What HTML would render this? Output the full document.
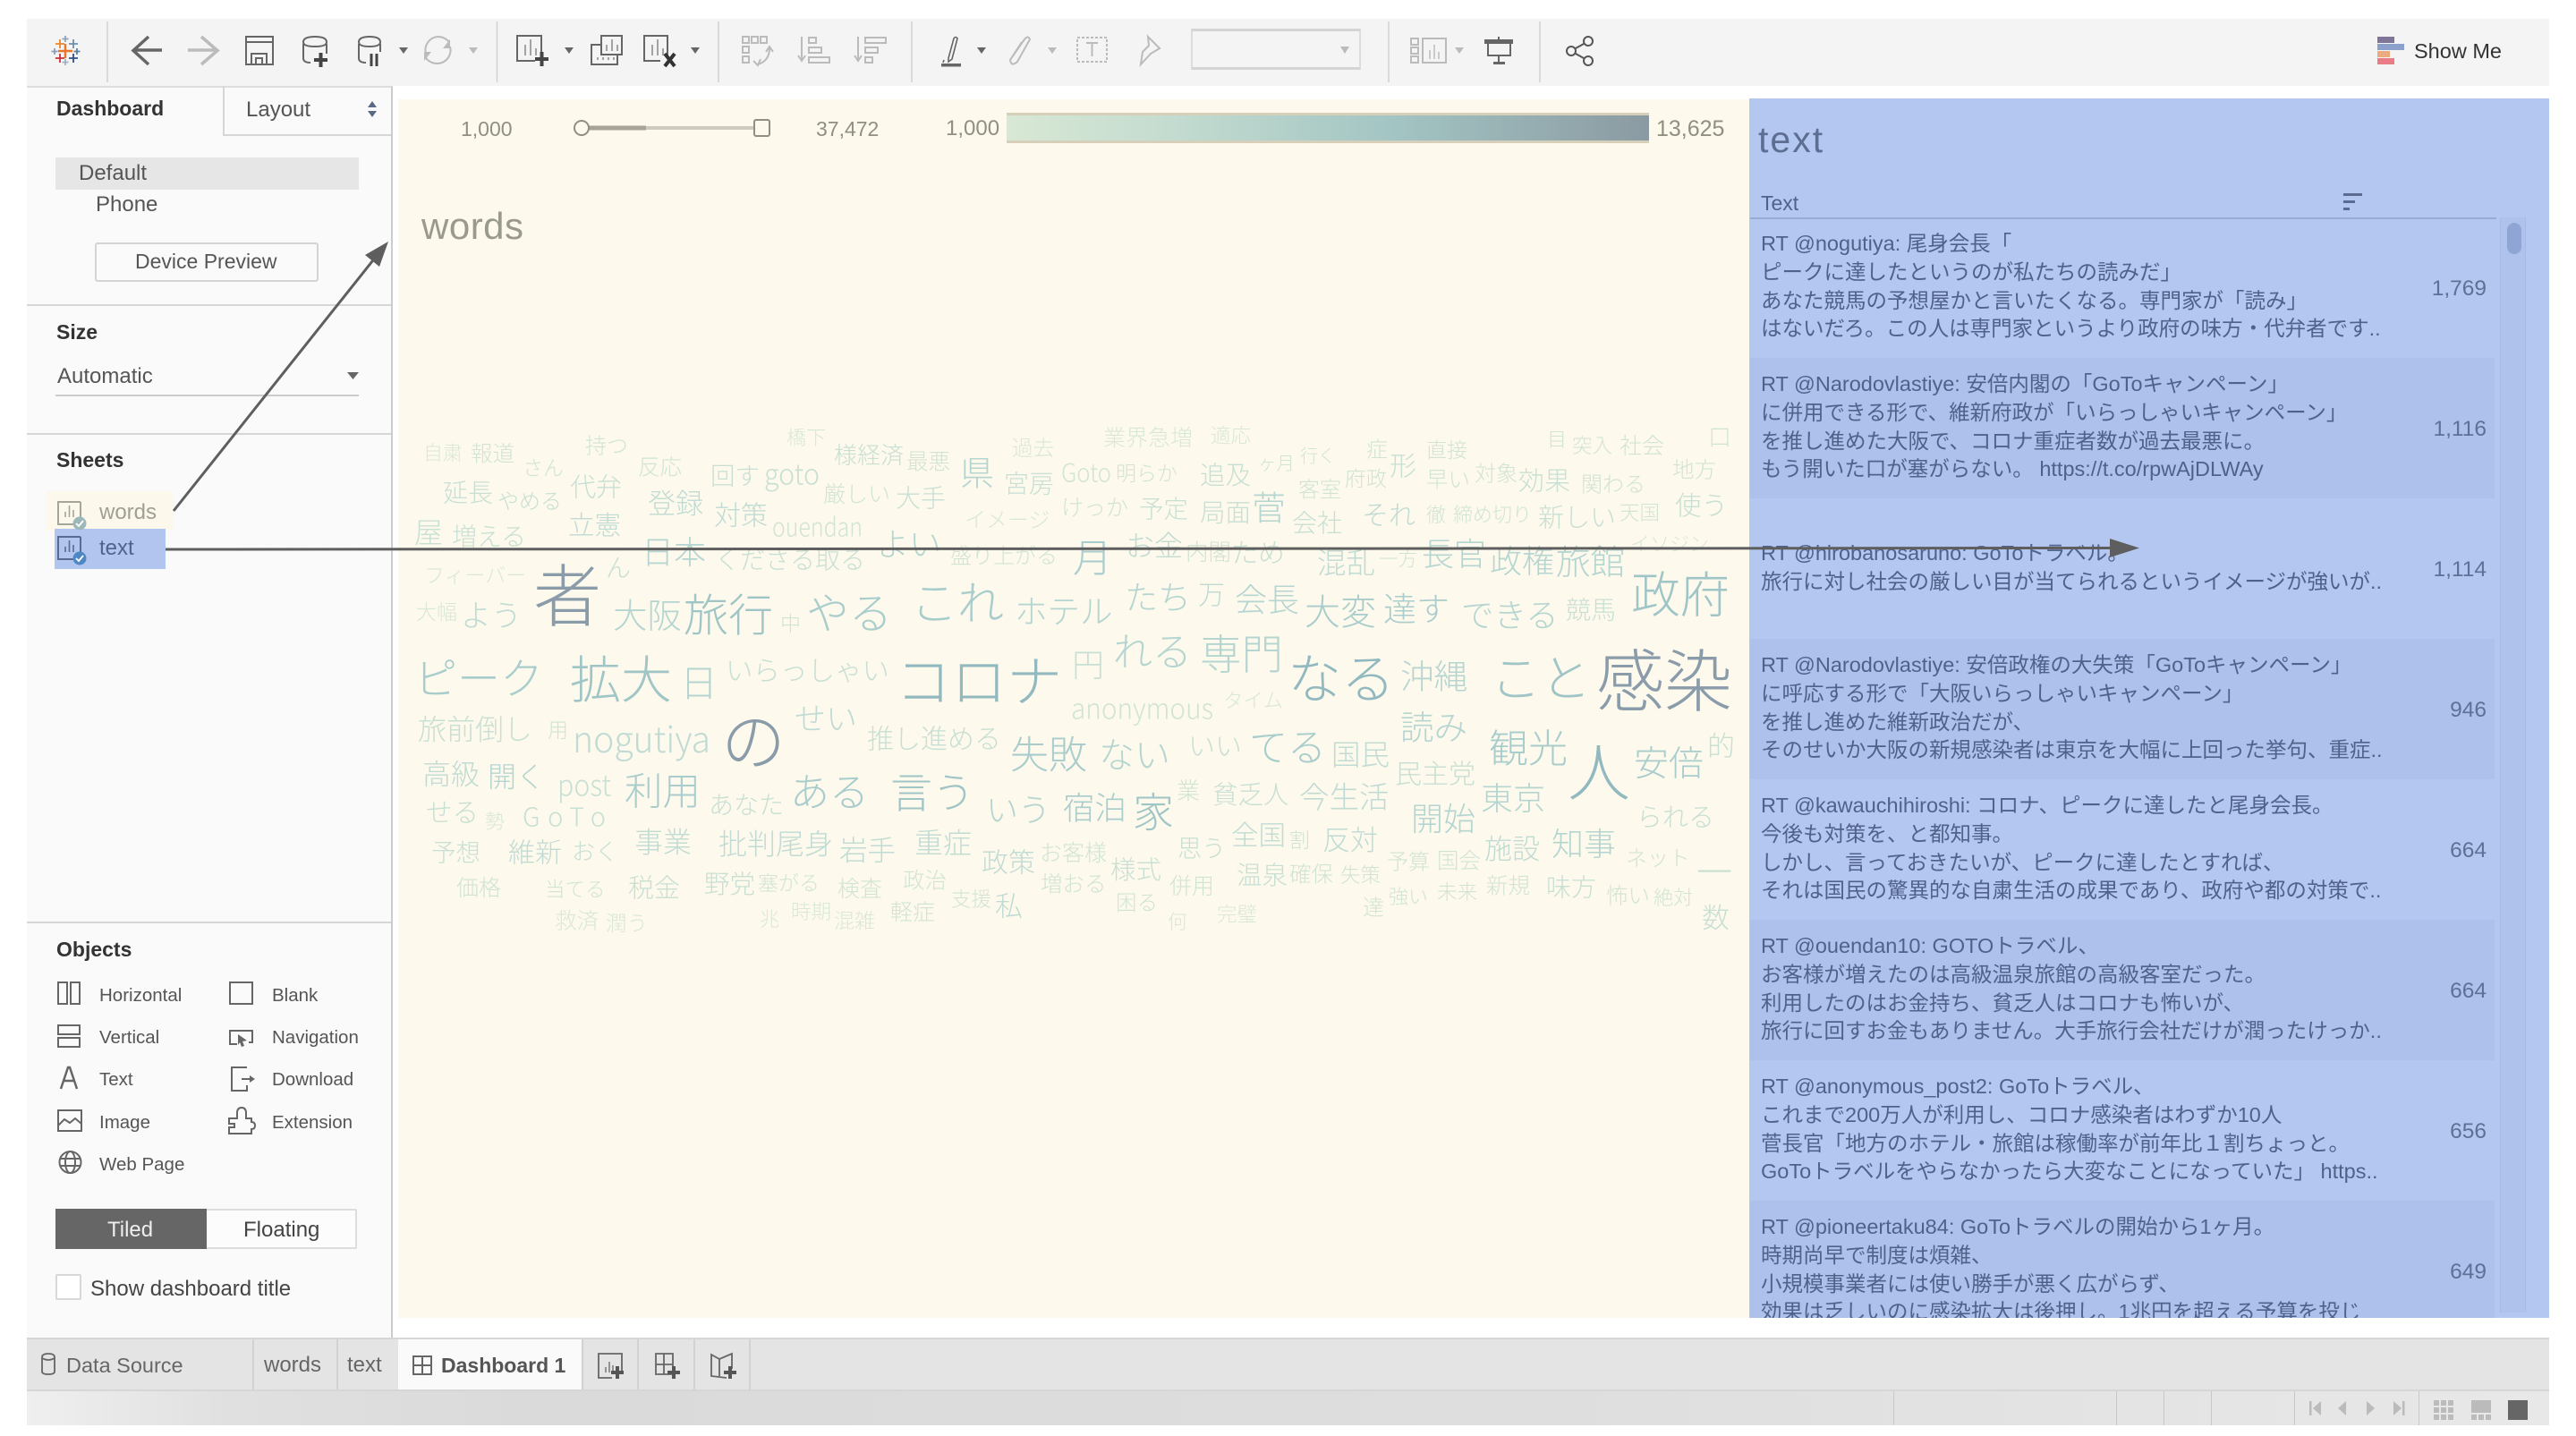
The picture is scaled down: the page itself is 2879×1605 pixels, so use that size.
<!DOCTYPE html>
<html lang="ja"><head><meta charset="utf-8"><title>Dashboard 1</title>
<style>
html,body{margin:0;padding:0;background:#fff;width:2879px;height:1605px;overflow:hidden}
body{position:relative;font-family:"Liberation Sans","Noto Sans CJK JP",sans-serif;color:#555}
.b{position:absolute;box-sizing:border-box}
.t{position:absolute;line-height:0;white-space:nowrap;font-size:24px;color:#555}
.h{font-weight:bold;font-size:23px;color:#333}
.o{font-size:20.5px;color:#555}
svg{position:absolute;left:0;top:0}
#cloud text{font-family:"Noto Sans CJK JP",sans-serif;font-weight:300;dominant-baseline:central;transform:translateY(-.05em)}
.a{fill:#d9e8d6}.c{fill:#d1e4d4}.d{fill:#c8dfd4}.e{fill:#c0dbd4}.f{fill:#b5d5d1}.g{fill:#a9cdcc}.i{fill:#a0c5c6}.j{fill:#93b9c0}.k{fill:#8a9caa}
.row{position:absolute;left:1956px;width:832px;height:157px;display:flex;align-items:center;overflow:visible}
.row.alt{background:#adc1ec}
.row .x{padding-left:12px;font-size:23.5px;line-height:31.7px;color:#50628a;white-space:nowrap;flex:1;position:relative;top:-1px}
.row .n{font-size:24.5px;color:#5f7096;padding-right:9px;position:relative;top:1px}
</style></head><body>

<!-- toolbar -->
<div class="b" style="left:30px;top:21px;width:2819px;height:75px;background:#f4f4f4"></div>

<!-- sidebar -->
<div class="b" style="left:30px;top:96px;width:409px;height:1399px;background:#fafafa;border-right:2px solid #ccc;border-top:2px solid #ddd"></div>
<div class="b" style="left:249px;top:96px;width:188px;height:56px;border-left:2px solid #d6d6d6;border-bottom:2px solid #d6d6d6"></div>
<div class="t h" style="left:63px;top:121px">Dashboard</div>
<div class="t" style="left:275px;top:123px">Layout</div>
<div class="b" style="left:62px;top:176px;width:339px;height:36px;background:#e6e6e6"></div>
<div class="t" style="left:88px;top:194px">Default</div>
<div class="t" style="left:107px;top:229px">Phone</div>
<div class="b" style="left:106px;top:271px;width:250px;height:44px;border:2px solid #d4d4d4;border-radius:3px"></div>
<div class="t" style="left:151px;top:292px;font-size:23px">Device Preview</div>
<div class="b" style="left:30px;top:340px;width:407px;height:2px;background:#d6d6d6"></div>
<div class="t h" style="left:63px;top:371px">Size</div>
<div class="t" style="left:64px;top:421px">Automatic</div>
<div class="b" style="left:62px;top:441px;width:339px;height:2px;background:#ccc"></div>
<div class="b" style="left:30px;top:484px;width:407px;height:2px;background:#d6d6d6"></div>
<div class="t h" style="left:63px;top:514px">Sheets</div>
<div class="b" style="left:52px;top:549px;width:142px;height:44px;background:#fcf9ec"></div>
<div class="b" style="left:61px;top:591px;width:124px;height:45px;background:#b1c5ee"></div>
<div class="t" style="left:111px;top:573px;color:#a0a092">words</div>
<div class="t" style="left:111px;top:613px;color:#50638a">text</div>
<div class="b" style="left:30px;top:1030px;width:407px;height:2px;background:#d6d6d6"></div>
<div class="t h" style="left:63px;top:1061px">Objects</div>
<div class="t o" style="left:111px;top:1113px">Horizontal</div>
<div class="t o" style="left:111px;top:1160px">Vertical</div>
<div class="t o" style="left:111px;top:1207px">Text</div>
<div class="t o" style="left:111px;top:1255px">Image</div>
<div class="t o" style="left:111px;top:1302px">Web Page</div>
<div class="t o" style="left:304px;top:1113px">Blank</div>
<div class="t o" style="left:304px;top:1160px">Navigation</div>
<div class="t o" style="left:304px;top:1207px">Download</div>
<div class="t o" style="left:304px;top:1255px">Extension</div>
<div class="b" style="left:62px;top:1351px;width:169px;height:45px;background:#666"></div>
<div class="b" style="left:231px;top:1351px;width:168px;height:45px;border:2px solid #ddd;border-left:0;border-radius:0 2px 2px 0;background:#fcfcfc"></div>
<div class="t" style="left:120px;top:1375px;color:#eee">Tiled</div>
<div class="t" style="left:272px;top:1375px;color:#444">Floating</div>
<div class="b" style="left:62px;top:1424px;width:29px;height:29px;border:2px solid #d8d8d8;background:#fff;border-radius:2px"></div>
<div class="t" style="left:101px;top:1441px;color:#444">Show dashboard title</div>

<!-- dashboard zones -->
<div class="b" style="left:445px;top:111px;width:1510px;height:1362px;background:#fdf9ec"></div>
<div class="t" style="left:515px;top:144px;font-size:23px;color:#8f8f82">1,000</div>
<div class="t" style="left:912px;top:144px;font-size:23px;color:#8f8f82">37,472</div>
<div class="t" style="left:1057px;top:144px;font-size:24px;color:#8f8f82">1,000</div>
<div class="b" style="left:1125px;top:126px;width:718px;height:34px;background:linear-gradient(90deg,#d8e8d4,#c4dcd0 25%,#a3c5c3 60%,#8b9aa2);border-top:3px solid #d6cfba;border-bottom:3px solid #d6cfba"></div>
<div class="t" style="left:1851px;top:144px;font-size:25px;color:#8f8f82">13,625</div>
<div class="t" style="left:471px;top:253px;font-size:42px;color:#9a9a8c;letter-spacing:.5px">words</div>

<!-- text panel -->
<div class="b" style="left:1955px;top:110px;width:894px;height:1363px;background:#b3c7f0;overflow:hidden">
  <div class="b" style="left:839px;top:133px;width:29px;height:1224px;background:#aec2ec;border-left:1px solid #a6bae5;border-right:1px solid #a6bae5"></div>
  <div class="b" style="left:847px;top:139px;width:16px;height:35px;background:#8fa5d4;border-radius:8px"></div>
  <div class="b" style="left:1px;top:133px;width:834px;height:2px;background:#98abd4"></div>
</div>
<div class="t" style="left:1965px;top:156px;font-size:41px;color:#5d6e92;letter-spacing:2px">text</div>
<div class="t" style="left:1968px;top:227px;font-size:23px;color:#50628a">Text</div>

<div class="b" style="left:0;top:0;width:2879px;height:1473px;overflow:hidden;pointer-events:none">
<div class="row" style="top:243px"><div class="x">RT @nogutiya: 尾身会長「<br>ピークに達したというのが私たちの読みだ」<br>あなた競馬の予想屋かと言いたくなる。専門家が「読み」<br>はないだろ。この人は専門家というより政府の味方・代弁者です..</div><div class="n">1,769</div></div>
<div class="row alt" style="top:400px"><div class="x">RT @Narodovlastiye: 安倍内閣の「GoToキャンペーン」<br>に併用できる形で、維新府政が「いらっしゃいキャンペーン」<br>を推し進めた大阪で、コロナ重症者数が過去最悪に。<br>もう開いた口が塞がらない。 https://t.co/rpwAjDLWAy</div><div class="n">1,116</div></div>
<div class="row" style="top:557px"><div class="x">RT @hirobanosaruno: GoToトラベル。<br>旅行に対し社会の厳しい目が当てられるというイメージが強いが..</div><div class="n">1,114</div></div>
<div class="row alt" style="top:714px"><div class="x">RT @Narodovlastiye: 安倍政権の大失策「GoToキャンペーン」<br>に呼応する形で「大阪いらっしゃいキャンペーン」<br>を推し進めた維新政治だが、<br>そのせいか大阪の新規感染者は東京を大幅に上回った挙句、重症..</div><div class="n">946</div></div>
<div class="row" style="top:871px"><div class="x">RT @kawauchihiroshi: コロナ、ピークに達したと尾身会長。<br>今後も対策を、と都知事。<br>しかし、言っておきたいが、ピークに達したとすれば、<br>それは国民の驚異的な自粛生活の成果であり、政府や都の対策で..</div><div class="n">664</div></div>
<div class="row alt" style="top:1028px"><div class="x">RT @ouendan10: GOTOトラベル、<br>お客様が増えたのは高級温泉旅館の高級客室だった。<br>利用したのはお金持ち、貧乏人はコロナも怖いが、<br>旅行に回すお金もありません。大手旅行会社だけが潤ったけっか..</div><div class="n">664</div></div>
<div class="row" style="top:1185px"><div class="x">RT @anonymous_post2: GoToトラベル、<br>これまで200万人が利用し、コロナ感染者はわずか10人<br>菅長官「地方のホテル・旅館は稼働率が前年比１割ちょっと。<br>GoToトラベルをやらなかったら大変なことになっていた」 https..</div><div class="n">656</div></div>
<div class="row alt" style="top:1342px"><div class="x">RT @pioneertaku84: GoToトラベルの開始から1ヶ月。<br>時期尚早で制度は煩雑、<br>小規模事業者には使い勝手が悪く広がらず、<br>効果は乏しいのに感染拡大は後押し。1兆円を超える予算を投じ</div><div class="n">649</div></div>
</div>

<!-- tab bar -->
<div class="b" style="left:30px;top:1495px;width:2819px;height:60px;background:#e4e4e4;border-top:2px solid #d6d6d6;border-bottom:2px solid #d6d6d6"></div>
<div class="b" style="left:445px;top:1497px;width:206px;height:56px;background:#fafafa"></div>
<div class="b" style="left:282px;top:1497px;width:2px;height:56px;background:#d2d2d2"></div>
<div class="b" style="left:376px;top:1497px;width:2px;height:56px;background:#d2d2d2"></div>
<div class="b" style="left:650px;top:1497px;width:2px;height:56px;background:#d2d2d2"></div>
<div class="b" style="left:712px;top:1497px;width:2px;height:56px;background:#d2d2d2"></div>
<div class="b" style="left:775px;top:1497px;width:2px;height:56px;background:#d2d2d2"></div>
<div class="b" style="left:837px;top:1497px;width:2px;height:56px;background:#d2d2d2"></div>
<div class="t" style="left:74px;top:1526px;font-size:23.5px;color:#666">Data Source</div>
<div class="t" style="left:295px;top:1526px;color:#666">words</div>
<div class="t" style="left:388px;top:1526px;color:#666">text</div>
<div class="t" style="left:493px;top:1526px;font-size:23px;font-weight:bold;color:#555">Dashboard 1</div>
<!-- status bar -->
<div class="b" style="left:30px;top:1555px;width:2819px;height:38px;background:linear-gradient(90deg,#efefef,#e0e0e0 8%,#dadada 20%,#dedede 60%,#e8e8e8)"></div>
<div class="b" style="left:2116px;top:1555px;width:1px;height:38px;background:#c8c8c8"></div>
<div class="b" style="left:2365px;top:1555px;width:1px;height:38px;background:#c8c8c8"></div>
<div class="b" style="left:2418px;top:1555px;width:1px;height:38px;background:#c8c8c8"></div>
<div class="b" style="left:2471px;top:1555px;width:1px;height:38px;background:#c8c8c8"></div>
<div class="b" style="left:2564px;top:1555px;width:1px;height:38px;background:#c8c8c8"></div>
<div class="b" style="left:2703px;top:1555px;width:1px;height:38px;background:#c8c8c8"></div>
<div class="b" style="left:2803px;top:1565px;width:22px;height:22px;background:#666"></div>

<!-- Show Me & dropdown -->
<div class="b" style="left:1331px;top:32px;width:190px;height:46px;border:2px solid #dcdcdc;border-top:3px solid #d4d4d4;border-bottom:3px solid #d4d4d4;background:#f4f4f4"></div>
<div class="t" style="left:2698px;top:57px;font-size:23.5px;color:#333">Show Me</div>

<!-- word cloud -->
<svg id="cloud" width="2879" height="1605" viewBox="0 0 2879 1605">
<text class="a" x="473" y="506" font-size="22">自粛</text>
<text class="c" x="526" y="507" font-size="24.5">報道</text>
<text class="c" x="584" y="522" font-size="23">さん</text>
<text class="c" x="654" y="497" font-size="24">持つ</text>
<text class="a" x="879" y="489" font-size="22">橋下</text>
<text class="d" x="932" y="509" font-size="26">様経済</text>
<text class="c" x="1013" y="516" font-size="24.5">最悪</text>
<text class="a" x="1131" y="500" font-size="23.5">過去</text>
<text class="c" x="713" y="522" font-size="24.5">反応</text>
<text class="d" x="794" y="531" font-size="27.5">回す</text>
<text class="d" x="854" y="530" font-size="32" textLength="62" lengthAdjust="spacingAndGlyphs">goto</text>
<text class="f" x="1073" y="528" font-size="38">県</text>
<text class="d" x="1122" y="541" font-size="28">宮房</text>
<text class="d" x="495" y="551" font-size="28">延長</text>
<text class="d" x="556" y="559" font-size="24">やめる</text>
<text class="d" x="637" y="544" font-size="29">代弁</text>
<text class="c" x="920" y="552" font-size="25">厳しい</text>
<text class="d" x="1001" y="557" font-size="28">大手</text>
<text class="e" x="724" y="562" font-size="31">登録</text>
<text class="e" x="798" y="575" font-size="30">対策</text>
<text class="a" x="1078" y="580" font-size="24">イメージ</text>
<text class="d" x="463" y="595" font-size="32">屋</text>
<text class="d" x="505" y="600" font-size="28">増える</text>
<text class="e" x="635" y="587" font-size="29.5">立憲</text>
<text class="c" x="863" y="589" font-size="29" textLength="101" lengthAdjust="spacingAndGlyphs">ouendan</text>
<text class="f" x="717" y="617" font-size="36">日本</text>
<text class="d" x="799" y="626" font-size="28">くださる取る</text>
<text class="f" x="980" y="608" font-size="36">よい</text>
<text class="c" x="1062" y="620" font-size="24">盛り上がる</text>
<text class="a" x="474" y="642" font-size="23">フィーバー</text>
<text class="k" x="596" y="665" font-size="76">者</text>
<text class="d" x="677" y="635" font-size="28">ん</text>
<text class="a" x="465" y="683" font-size="23">大幅</text>
<text class="e" x="515" y="687" font-size="34">よう</text>
<text class="f" x="685" y="688" font-size="38.5">大阪</text>
<text class="i" x="764" y="687" font-size="50">旅行</text>
<text class="c" x="872" y="696" font-size="23">中</text>
<text class="g" x="901" y="684" font-size="48">やる</text>
<text class="g" x="1018" y="673" font-size="52">これ</text>
<text class="f" x="1134" y="683" font-size="36.5">ホテル</text>
<text class="g" x="463" y="757" font-size="48">ピーク</text>
<text class="i" x="637" y="759" font-size="57">拡大</text>
<text class="f" x="760" y="763" font-size="42">日</text>
<text class="d" x="811" y="749" font-size="30.5">いらっしゃい</text>
<text class="j" x="1001" y="760" font-size="62">コロナ</text>
<text class="d" x="1198" y="743" font-size="36">円</text>
<text class="f" x="1244" y="727" font-size="44">れる</text>
<text class="f" x="1341" y="731" font-size="46.5">専門</text>
<text class="j" x="1439" y="758" font-size="60">なる</text>
<text class="f" x="1565" y="755" font-size="37.5">沖縄</text>
<text class="i" x="1666" y="758" font-size="56">こと</text>
<text class="k" x="1784" y="760" font-size="76">感染</text>
<text class="a" x="1233" y="489" font-size="25">業界急増</text>
<text class="a" x="1353" y="487" font-size="22.5">適応</text>
<text class="c" x="1186" y="529" font-size="28" textLength="56" lengthAdjust="spacingAndGlyphs">Goto</text>
<text class="c" x="1247" y="528" font-size="23">明らか</text>
<text class="d" x="1341" y="531" font-size="28.5">追及</text>
<text class="c" x="1406" y="517" font-size="20.5">ヶ月</text>
<text class="c" x="1453" y="509" font-size="20">行く</text>
<text class="c" x="1527" y="501" font-size="24">症</text>
<text class="d" x="1553" y="520" font-size="30">形</text>
<text class="c" x="1594" y="502" font-size="23">直接</text>
<text class="c" x="1729" y="491" font-size="22">目</text>
<text class="c" x="1757" y="498" font-size="22.5">突入</text>
<text class="c" x="1810" y="498" font-size="25">社会</text>
<text class="c" x="1909" y="489" font-size="26">口</text>
<text class="c" x="1451" y="546" font-size="24">客室</text>
<text class="c" x="1503" y="534" font-size="23.5">府政</text>
<text class="c" x="1594" y="536" font-size="24.5">早い</text>
<text class="c" x="1648" y="528" font-size="24">対象</text>
<text class="d" x="1697" y="537" font-size="29">効果</text>
<text class="c" x="1767" y="540" font-size="24">関わる</text>
<text class="c" x="1869" y="525" font-size="24.5">地方</text>
<text class="c" x="1186" y="567" font-size="25">けっか</text>
<text class="d" x="1273" y="568" font-size="27.5">予定</text>
<text class="d" x="1341" y="573" font-size="28.5">局面</text>
<text class="f" x="1399" y="567" font-size="38">菅</text>
<text class="d" x="1444" y="585" font-size="28">会社</text>
<text class="e" x="1522" y="575" font-size="30">それ</text>
<text class="c" x="1594" y="575" font-size="22">徹</text>
<text class="c" x="1624" y="575" font-size="22">締め切り</text>
<text class="d" x="1719" y="578" font-size="29">新しい</text>
<text class="c" x="1810" y="573" font-size="22.5">天国</text>
<text class="d" x="1872" y="565" font-size="29.5">使う</text>
<text class="g" x="1199" y="622" font-size="44">月</text>
<text class="e" x="1258" y="610" font-size="32">お金</text>
<text class="c" x="1325" y="617" font-size="25.5">内閣</text>
<text class="d" x="1376" y="617" font-size="30">ため</text>
<text class="e" x="1472" y="629" font-size="32.5">混乱</text>
<text class="c" x="1541" y="625" font-size="21.5">一方</text>
<text class="f" x="1589" y="619" font-size="36">長官</text>
<text class="f" x="1665" y="627" font-size="36">政権</text>
<text class="f" x="1739" y="628" font-size="38.5">旅館</text>
<text class="a" x="1822" y="608" font-size="22">イソジン</text>
<text class="f" x="1257" y="667" font-size="37">たち</text>
<text class="e" x="1339" y="664" font-size="30">万</text>
<text class="f" x="1380" y="670" font-size="36">会長</text>
<text class="g" x="1458" y="683" font-size="40">大変</text>
<text class="g" x="1546" y="680" font-size="37">達す</text>
<text class="f" x="1633" y="687" font-size="36.5">できる</text>
<text class="d" x="1750" y="682" font-size="28">競馬</text>
<text class="i" x="1823" y="663" font-size="55">政府</text>
<text class="d" x="467" y="815" font-size="32">旅前倒し</text>
<text class="c" x="612" y="815" font-size="23">用</text>
<text class="e" x="640" y="826" font-size="40" textLength="154" lengthAdjust="spacingAndGlyphs">nogutiya</text>
<text class="k" x="806" y="827" font-size="72">の</text>
<text class="e" x="888" y="803" font-size="35">せい</text>
<text class="d" x="969" y="825" font-size="30">推し進める</text>
<text class="g" x="1129" y="843" font-size="43">失敗</text>
<text class="f" x="1228" y="843" font-size="40">ない</text>
<text class="d" x="1328" y="833" font-size="30">いい</text>
<text class="g" x="1396" y="835" font-size="43">てる</text>
<text class="e" x="1488" y="843" font-size="32.5">国民</text>
<text class="f" x="1565" y="812" font-size="37.5">読み</text>
<text class="g" x="1664" y="835" font-size="44">観光</text>
<text class="j" x="1752" y="863" font-size="70">人</text>
<text class="g" x="1826" y="853" font-size="39">安倍</text>
<text class="d" x="1908" y="833" font-size="31">的</text>
<text class="e" x="472" y="865" font-size="32">高級</text>
<text class="f" x="545" y="868" font-size="32">開く</text>
<text class="d" x="623" y="877" font-size="33" textLength="60" lengthAdjust="spacingAndGlyphs">post</text>
<text class="g" x="698" y="884" font-size="42.5">利用</text>
<text class="d" x="792" y="900" font-size="28">あなた</text>
<text class="g" x="883" y="884" font-size="44">ある</text>
<text class="i" x="995" y="885" font-size="47">言う</text>
<text class="f" x="1102" y="905" font-size="36">いう</text>
<text class="g" x="1188" y="903" font-size="35.5">宿泊</text>
<text class="i" x="1266" y="908" font-size="46">家</text>
<text class="c" x="1315" y="884" font-size="26">業</text>
<text class="d" x="1355" y="888" font-size="28.5">貧乏人</text>
<text class="e" x="1452" y="890" font-size="33.5">今生活</text>
<text class="d" x="1559" y="864" font-size="30">民主党</text>
<text class="f" x="1655" y="892" font-size="36">東京</text>
<text class="f" x="1577" y="915" font-size="36">開始</text>
<text class="d" x="1829" y="913" font-size="29">られる</text>
<text class="d" x="476" y="908" font-size="29.5">せる</text>
<text class="a" x="542" y="918" font-size="22">勢</text>
<text class="d" x="584" y="913" font-size="29" textLength="93">GoTo</text>
<text class="e" x="709" y="941" font-size="32">事業</text>
<text class="e" x="803" y="943" font-size="32">批判尾身</text>
<text class="e" x="938" y="950" font-size="31.5">岩手</text>
<text class="e" x="1022" y="942" font-size="32">重症</text>
<text class="e" x="1097" y="963" font-size="30">政策</text>
<text class="c" x="1162" y="953" font-size="25">お客様</text>
<text class="d" x="1241" y="972" font-size="28.5">様式</text>
<text class="d" x="1316" y="948" font-size="27">思う</text>
<text class="e" x="1376" y="933" font-size="30.5">全国</text>
<text class="c" x="1441" y="938" font-size="23">割</text>
<text class="e" x="1478" y="938" font-size="31">反対</text>
<text class="e" x="1659" y="948" font-size="31">施設</text>
<text class="f" x="1734" y="943" font-size="36">知事</text>
<text class="c" x="1817" y="958" font-size="24">ネット</text>
<text class="d" x="1896" y="974" font-size="40">一</text>
<text class="d" x="482" y="952" font-size="27.5">予想</text>
<text class="e" x="568" y="952" font-size="30">維新</text>
<text class="d" x="639" y="952" font-size="26">おく</text>
<text class="c" x="510" y="992" font-size="25">価格</text>
<text class="c" x="609" y="994" font-size="22.5">当てる</text>
<text class="d" x="702" y="992" font-size="29">税金</text>
<text class="d" x="787" y="988" font-size="28.5">野党</text>
<text class="c" x="847" y="986" font-size="23">塞がる</text>
<text class="c" x="936" y="993" font-size="25">検査</text>
<text class="c" x="1009" y="984" font-size="24.5">政治</text>
<text class="c" x="1063" y="1005" font-size="22.5">支援</text>
<text class="e" x="1112" y="1012" font-size="31">私</text>
<text class="c" x="1163" y="988" font-size="24.5">増おる</text>
<text class="c" x="1307" y="990" font-size="25">併用</text>
<text class="c" x="1247" y="1008" font-size="23.5">困る</text>
<text class="d" x="1382" y="978" font-size="28.5">温泉</text>
<text class="c" x="1441" y="977" font-size="24.5">確保</text>
<text class="c" x="1498" y="978" font-size="22.5">失策</text>
<text class="c" x="1550" y="962" font-size="24">予算</text>
<text class="c" x="1606" y="962" font-size="24.5">国会</text>
<text class="c" x="1552" y="1002" font-size="22">強い</text>
<text class="c" x="1606" y="997" font-size="22.5">未来</text>
<text class="c" x="1661" y="990" font-size="24.5">新規</text>
<text class="d" x="1728" y="992" font-size="28">味方</text>
<text class="c" x="1795" y="1001" font-size="24.5">怖い</text>
<text class="c" x="1848" y="1003" font-size="22">絶対</text>
<text class="d" x="1902" y="1025" font-size="31">数</text>
<text class="c" x="1523" y="1013" font-size="24">達</text>
<text class="a" x="1360" y="1022" font-size="22.5">完璧</text>
<text class="a" x="1305" y="1030" font-size="22">何</text>
<text class="a" x="620" y="1029" font-size="24.5">救済</text>
<text class="a" x="677" y="1031" font-size="23.5">潤う</text>
<text class="a" x="849" y="1027" font-size="22">兆</text>
<text class="a" x="884" y="1019" font-size="22.5">時期</text>
<text class="a" x="932" y="1028" font-size="23">混雑</text>
<text class="c" x="995" y="1019" font-size="25">軽症</text>
<text class="c" x="1197" y="792" font-size="32" textLength="159" lengthAdjust="spacingAndGlyphs">anonymous</text>
<text class="a" x="1367" y="783" font-size="22.5">タイム</text>
</svg>

<!-- icons and arrows -->
<svg width="2879" height="1605" viewBox="0 0 2879 1605" fill="none">
<!-- toolbar dividers -->
<path d="M120 24V92M555.5 24V92M803 24V92M1019 24V92M1552 24V92M1721 24V92" stroke="#d2d2d2" stroke-width="1.5"/>
<!-- logo -->
<g stroke-width="1.8">
<path d="M73 40V47M69.5 43.5H76.5" stroke="#8fa3b8"/>
<path d="M67 44V54M62 49H72" stroke="#e8862f"/>
<path d="M82 44V54M77 49H87" stroke="#6d8fae"/>
<path d="M73 49V65M65 57H81" stroke="#e8762b" stroke-width="2.5"/>
<path d="M61 54V61M57.5 57.5H64.5" stroke="#8aa0b6"/>
<path d="M86 54V61M82.5 57.5H89.5" stroke="#5f7f9e"/>
<path d="M67 60V70M62 65H72" stroke="#c8323c"/>
<path d="M82 60V70M77 65H87" stroke="#2d4f86"/>
<path d="M73 66V73M69.5 69.5H76.5" stroke="#9fb2c4"/>
</g>
<!-- back / forward -->
<path d="M181 56H150M166 41L149 56.5L166 72" stroke="#666" stroke-width="3.5"/>
<path d="M210 56H241M225 41L243 56.5L225 72" stroke="#bbb" stroke-width="3.5"/>
<!-- save -->
<path d="M275 41H305V72H275ZM275 47H305M281 72V60H298V72M286 72V65H293V72" stroke="#666" stroke-width="2"/>
<!-- new data source -->
<path d="M339 49V65Q339 70 347 70M365 49V60M339 47Q339 41 352 41Q365 41 365 47Q365 52 352 52Q339 52 339 47Z" stroke="#666" stroke-width="2"/>
<path d="M351 67H366M358.5 59V75" stroke="#444" stroke-width="4"/>
<!-- pause -->
<path d="M401 49V65Q401 70 409 70M425 49V58M401 47Q401 41 413 41Q425 41 425 47Q425 52 413 52Q401 52 401 47Z" stroke="#666" stroke-width="2"/>
<path d="M415 60V74M421 60V74" stroke="#444" stroke-width="3"/>
<g fill="#666"><path d="M446 53H456L451 60Z"/><path d="M631 53H641L636 60Z"/><path d="M772 53H782L777 60Z"/><path d="M1092 53H1102L1097 60Z"/></g>
<g fill="#bbb"><path d="M524 53H534L529 60Z"/><path d="M1171 53H1181L1176 60Z"/><path d="M1626 53H1636L1631 60Z"/><path d="M1498 52H1508L1503 60Z"/></g>
<!-- refresh -->
<path d="M476 60A15 15 0 0 1 489 41Q497 41 502 47M503 52A15 15 0 0 1 489 71Q481 71 476 65" stroke="#bbb" stroke-width="2"/>
<path d="M503 44V54H495ZM474 68V58H482Z" fill="#bbb"/>
<!-- new sheet -->
<path d="M605 64V40H578V68H598" stroke="#666" stroke-width="2"/>
<path d="M587 62V50M593 62V44M599 62V54" stroke="#888" stroke-width="1.5"/>
<path d="M598 66H613M605.5 58V74" stroke="#444" stroke-width="4"/>
<!-- duplicate -->
<path d="M672 50V40H695V61H685" stroke="#666" stroke-width="2"/>
<path d="M678 57V50M684 57V44M690 57V50" stroke="#888" stroke-width="1.5"/>
<path d="M672 50H661V72H690V61H672V50" stroke="#666" stroke-width="2"/>
<path d="M668 67V64M674 67V64M680 67V64M686 67V64" stroke="#888" stroke-width="1.5"/>
<!-- clear -->
<path d="M746 62V40H720V68H738" stroke="#666" stroke-width="2"/>
<path d="M729 62V50M735 62V44M741 62V54" stroke="#888" stroke-width="1.5"/>
<path d="M743 60L754 74M754 60L743 74" stroke="#333" stroke-width="4"/>
<!-- swap -->
<g stroke="#bbb" stroke-width="2">
<path d="M830 41h7v7h-7zM840 41h7v7h-7zM850 41h7v7h-7zM830 52h7v7h-7zM830 63h7v7h-7z"/>
<path d="M860 54Q860 68 847 72M842 68L847 73L850 66M856 58L860 52L864 58"/>
<!-- sort asc -->
<path d="M896 41V68M892 62L896 68L900 62"/><path d="M904 42h8v6h-8zM904 53h14v6h-14zM904 64h23v6h-23z"/>
<!-- sort desc -->
<path d="M959 41V68M955 62L959 68L963 62"/><path d="M967 42h23v6h-23zM967 53h14v6h-14zM967 64h8v6h-8z"/>
<!-- clip -->
<path d="M1131 64L1145 44Q1149 39 1151 44L1137 69Q1130 75 1129 67L1142 47" stroke-width="2"/>
<!-- textbox -->
<path d="M1204 42H1237V69H1204Z" stroke-dasharray="3 2"/><path d="M1214 48H1227M1220.5 48V63"/>
<!-- pin -->
<path d="M1283 41L1296 54L1286 60L1275 72L1277 58L1284 51Z"/>
<!-- chart -->
<path d="M1590 43H1616V70H1590Z"/><path d="M1598 66V56M1603 66V50M1608 66V58" stroke-width="1.5"/>
<path d="M1577 43h8v7h-8zM1577 53h8v7h-8zM1577 63h8v7h-8z"/>
</g>
<!-- highlight -->
<path d="M1060 65L1066 43Q1068 40 1070 43L1064 66L1060 69ZM1055 67L1054 70" stroke="#666" stroke-width="1.6"/>
<rect x="1052" y="71" width="22" height="3.5" fill="#666"/>
<!-- presentation -->
<path d="M1675 41V46M1675 72V62M1663 46H1688V62H1663Z" stroke="#666" stroke-width="2"/>
<rect x="1659" y="44" width="32" height="5" fill="#666"/><rect x="1669" y="69" width="13" height="3" fill="#666"/>
<!-- share -->
<g stroke="#555" stroke-width="2"><circle cx="1775" cy="46" r="5"/><circle cx="1756" cy="57" r="5"/><circle cx="1775" cy="68" r="5"/><path d="M1761 54L1770 49M1761 60L1770 65"/></g>
<!-- show me -->
<rect x="2657" y="41" width="19" height="7" fill="#7f7598"/><rect x="2657" y="49" width="30" height="7" fill="#8ba0cb"/><rect x="2657" y="57" width="14" height="7" fill="#eaac7e"/><rect x="2657" y="65" width="19" height="7" fill="#e87d85"/>
<!-- legend slider -->
<path d="M650 143H855" stroke="#cfcabb" stroke-width="4"/><path d="M656 143H722" stroke="#a8a597" stroke-width="5"/>
<circle cx="650" cy="143" r="8" fill="#fdf9ec" stroke="#8f8f82" stroke-width="2"/>
<rect x="843" y="134" width="17" height="18" rx="2" fill="#fdf9ec" stroke="#8f8f82" stroke-width="2"/>
<!-- layout chevron + size caret -->
<path d="M411 120L416 113L421 120ZM411 124L416 131L421 124Z" fill="#5a6a85"/>
<path d="M388 416H401L394.5 424Z" fill="#666"/>
<!-- sheet icons -->
<path d="M90 561H65V586H83M90 561V578" stroke="#a5a598" stroke-width="2"/>
<path d="M73 578V572M77.5 578V565M82 578V570" stroke="#a5a598" stroke-width="1.6"/>
<circle cx="89" cy="585" r="7.5" fill="#9db8b8"/><path d="M85 585L88 588L93 582" stroke="#fff" stroke-width="1.8"/>
<path d="M90 600H65V625H83M90 600V617" stroke="#5a6a90" stroke-width="2"/>
<path d="M73 617V611M77.5 617V604M82 617V609" stroke="#5a6a90" stroke-width="1.6"/>
<circle cx="89" cy="624" r="7.5" fill="#4e88c4"/><path d="M85 624L88 627L93 621" stroke="#fff" stroke-width="1.8"/>
<!-- object icons -->
<g stroke="#666" stroke-width="2">
<path d="M65 1098H75V1122H65ZM79 1098H89V1122H79Z"/>
<path d="M257 1098H282V1122H257Z"/>
<path d="M65 1146H89V1156H65ZM65 1160H89V1170H65Z"/>
<path d="M265 1167H257V1152H282V1165H278"/>
<path d="M68 1217L76 1193H78L86 1217M71 1208H83" stroke-width="2.5"/>
<path d="M276 1193H259V1219H276V1213M259 1193V1219" stroke-width="2"/>
<path d="M270 1206H281" stroke-width="2"/>
<path d="M65 1241H91V1264H65ZM65 1258L72 1251L78 1255L84 1250L91 1256"/>
<path d="M256 1250H265V1244Q265 1238 270 1238Q275 1238 275 1244V1250H281V1254Q285 1254 285 1258Q285 1262 281 1262V1267H256V1260H262V1256H256Z"/>
<circle cx="78.5" cy="1299" r="12"/><ellipse cx="78.5" cy="1299" rx="5.5" ry="12"/><path d="M67 1295H90M67 1303H90"/>
<!-- tab icons -->
<path d="M47 1517Q47 1513 54 1513Q61 1513 61 1517V1533Q61 1536 54 1536Q47 1536 47 1533ZM47 1518Q54 1522 61 1518" stroke-width="1.8"/>
<path d="M462 1516H482V1536H462ZM472 1516V1536M462 1526H482"/>
<path d="M695 1534V1513H669V1540H684" stroke-width="1.8"/><path d="M677 1534V1528M681 1534V1522M685 1534V1526" stroke-width="1.3"/>
<path d="M752 1536H733V1513H752V1530M742 1513V1536M733 1525H752" stroke-width="1.8"/>
<path d="M812 1540L795 1538V1514L804 1519L818 1513V1530M804 1519V1538" stroke-width="1.8"/>
</g>
<path d="M266 1156L276 1163L271 1164L273 1169L270 1170L268 1165L266 1168Z" fill="#666"/>
<path d="M279 1202L285 1206L279 1210Z" fill="#666"/>
<path d="M683 1534H697M690 1527V1541M746 1534H760M753 1527V1541M809 1534H823M816 1527V1541" stroke="#555" stroke-width="4"/>
<!-- status icons -->
<g fill="#bbb">
<rect x="2581" y="1566" width="2.5" height="16"/><path d="M2594 1566V1582L2585 1574Z"/>
<path d="M2622 1566V1582L2613 1574Z"/>
<path d="M2645 1566V1582L2654 1574Z"/>
<path d="M2675 1566V1582L2684 1574Z"/><rect x="2685" y="1566" width="2.5" height="16"/>
<path d="M2720 1565h6v6h-6zM2728 1565h6v6h-6zM2736 1565h6v6h-6zM2720 1573h6v6h-6zM2728 1573h6v6h-6zM2736 1573h6v6h-6zM2720 1581h6v6h-6zM2728 1581h6v6h-6zM2736 1581h6v6h-6z"/>
<rect x="2762" y="1565" width="22" height="14"/><path d="M2762 1581h6v6h-6zM2770 1581h6v6h-6zM2778 1581h6v6h-6z"/>
</g>
<!-- sort header icon -->
<path d="M2619 216h21v3h-21zM2619 224h13v3h-13zM2619 232h7v3h-7z" fill="#5a6a90"/>
<!-- arrows -->
<path d="M194 571L424 282" stroke="#5e5e5e" stroke-width="3"/>
<path d="M434 270L424 298L408 285Z" fill="#5e5e5e"/>
<path d="M185 614L2362 612.5" stroke="#5e5e5e" stroke-width="3"/>
<path d="M2358 602L2391 612.5L2358 623Z" fill="#5e5e5e"/>
</svg>
</body></html>
